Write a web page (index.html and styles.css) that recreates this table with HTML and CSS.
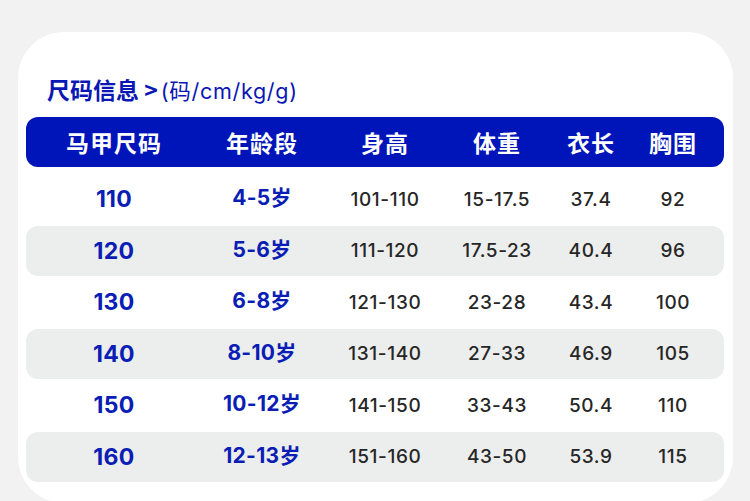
FILE: index.html
```html
<!DOCTYPE html>
<html lang="zh">
<head>
<meta charset="utf-8">
<link rel="stylesheet" href="styles.css">
</head>
<body>
<div class="card">
  <h2 class="title"><span class="title-main">尺码信息 &gt;</span><span class="title-unit">(码/cm/kg/g)</span></h2>
  <div class="table">
    <div class="row head">
      <div>马甲尺码</div><div>年龄段</div><div>身高</div><div>体重</div><div>衣长</div><div>胸围</div>
    </div>
    <div class="rows">
      <div class="row">
        <div class="size">110</div><div class="age">4-5岁</div><div>101-110</div><div>15-17.5</div><div>37.4</div><div>92</div>
      </div>
      <div class="row alt">
        <div class="size">120</div><div class="age">5-6岁</div><div>111-120</div><div>17.5-23</div><div>40.4</div><div>96</div>
      </div>
      <div class="row">
        <div class="size">130</div><div class="age">6-8岁</div><div>121-130</div><div>23-28</div><div>43.4</div><div>100</div>
      </div>
      <div class="row alt">
        <div class="size">140</div><div class="age">8-10岁</div><div>131-140</div><div>27-33</div><div>46.9</div><div>105</div>
      </div>
      <div class="row">
        <div class="size">150</div><div class="age">10-12岁</div><div>141-150</div><div>33-43</div><div>50.4</div><div>110</div>
      </div>
      <div class="row alt">
        <div class="size">160</div><div class="age">12-13岁</div><div>151-160</div><div>43-50</div><div>53.9</div><div>115</div>
      </div>
    </div>
  </div>
</div>
</body>
</html>
```

FILE: styles.css
```css
html, body {
  margin: 0;
  padding: 0;
}
body {
  background: #f2f2f2;
  width: 750px;
  height: 501px;
  overflow: hidden;
  font-family: Inter, "Noto Sans CJK SC", sans-serif;
}
.card {
  margin: 32px 17px 0 18px;
  height: 471px;
  background: #ffffff;
  border-radius: 46px;
  padding: 35px 8px 0 8px;
  box-sizing: border-box;
}
.title {
  margin: 0 0 0 21px;
  height: 44px;
  display: flex;
  align-items: center;
  color: #0a17b4;
  font-weight: normal;
  margin-bottom: 6px;
}
.title-main {
  font-family: "Noto Sans CJK SC", sans-serif;
  font-weight: 700;
  font-size: 23px;
  margin-right: 3px;
}
.title-unit {
  font-family: Inter, "Noto Sans CJK SC", sans-serif;
  font-size: 21.5px;
  font-weight: 400;
  letter-spacing: 0.7px;
}
.table {
  width: 698px;
}
.row {
  display: grid;
  grid-template-columns: 176px 120px 126px 98px 90px 74px;
  padding-right: 14px;
  height: 50px;
  align-items: center;
  border-radius: 12px;
  font-size: 19px;
  font-weight: 500;
  letter-spacing: 0.6px;
  color: #262626;
}
.row > div {
  text-align: center;
}
.head {
  background: #0015b9;
  color: #ffffff;
  font-family: "Noto Sans CJK SC", sans-serif;
  font-weight: 700;
  font-size: 23px;
  letter-spacing: 1px;
}
.rows {
  margin-top: 7px;
  display: flex;
  flex-direction: column;
  gap: 1.5px;
}
.alt {
  background: #eceded;
}
.size {
  color: #0a1db4;
  font-weight: 700;
  font-size: 23px;
  letter-spacing: 0.3px;
}
.age {
  color: #0a1db4;
  font-weight: 700;
  font-size: 21px;
  letter-spacing: 0.3px;
  margin-top: -6px;
}
```
